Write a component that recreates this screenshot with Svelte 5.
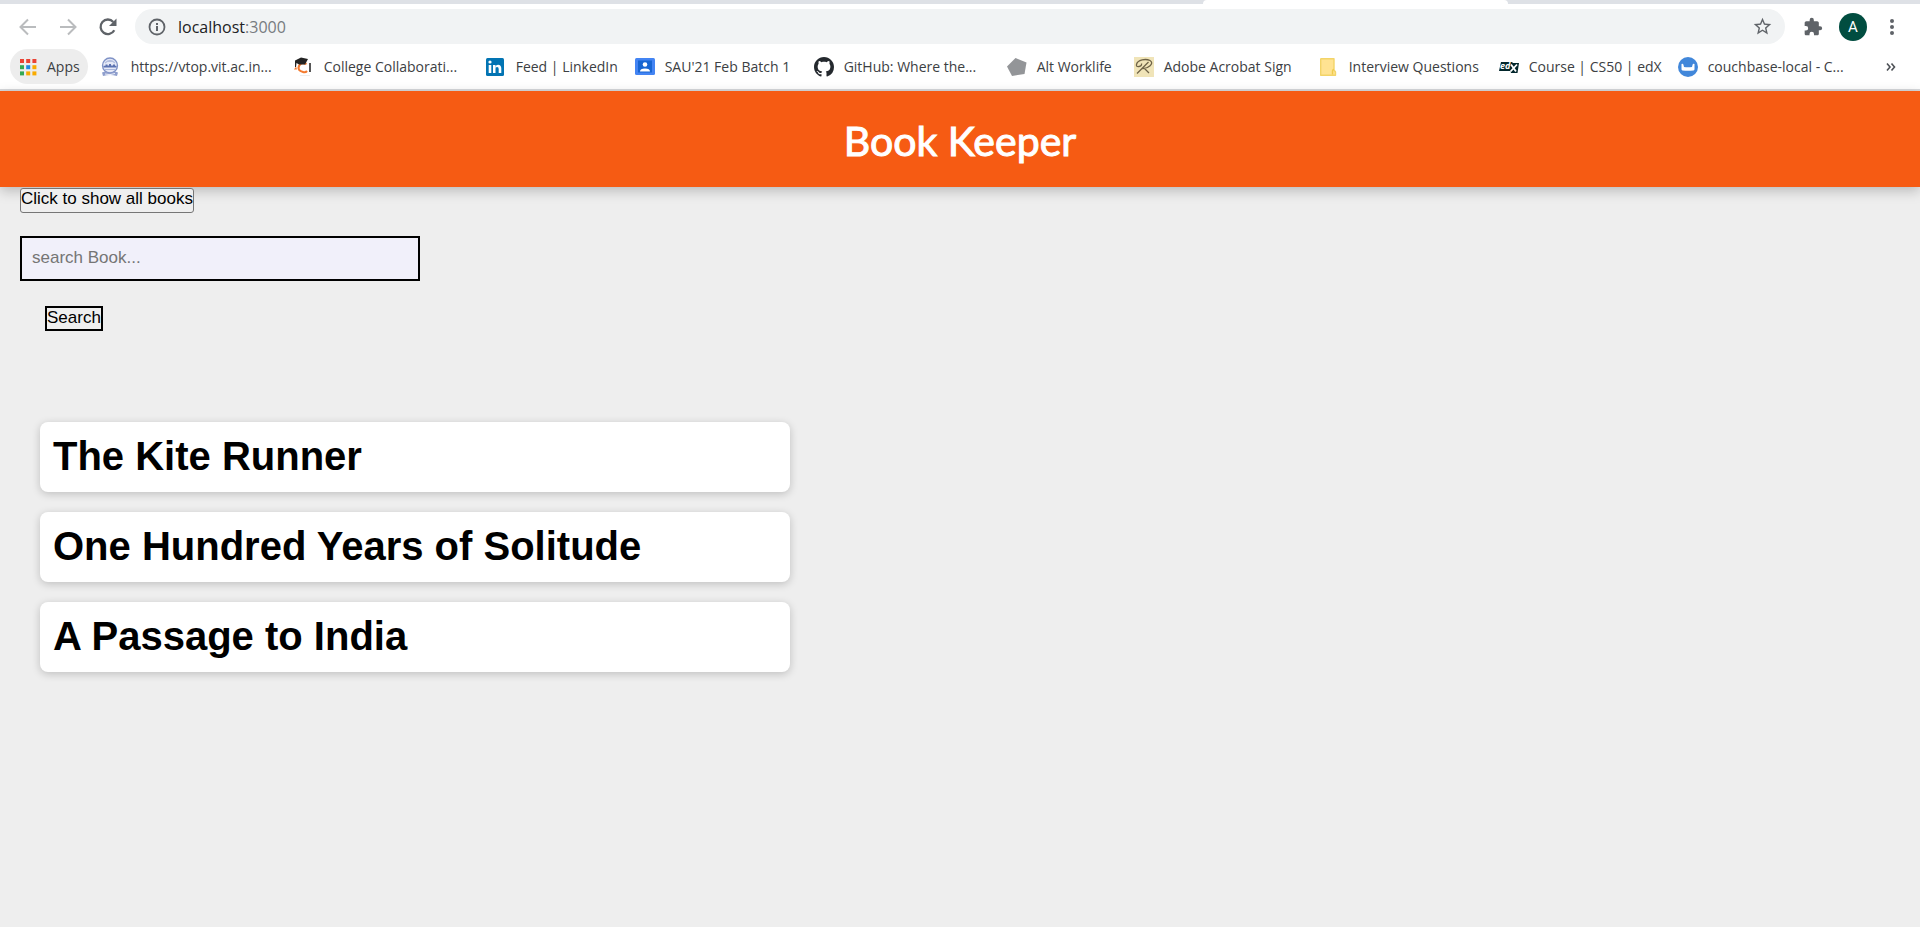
<script>
  const bookmarks = [
    { icon: 'vit', label: 'https://vtop.vit.ac.in...', width: 193 },
    { icon: 'college', label: 'College Collaborati...', width: 192 },
    { icon: 'linkedin', label: 'Feed | LinkedIn', width: 149 },
    { icon: 'contacts', label: "SAU'21 Feb Batch 1", width: 179 },
    { icon: 'github', label: 'GitHub: Where the...', width: 193 },
    { icon: 'pentagon', label: 'Alt Worklife', width: 127 },
    { icon: 'sign', label: 'Adobe Acrobat Sign', width: 185 },
    { icon: 'note', label: 'Interview Questions', width: 180 },
    { icon: 'edx', label: 'Course | CS50 | edX', width: 179 },
    { icon: 'couch', label: 'couchbase-local - C...', width: 180 }
  ];
  const appColors = ['#ea4335', '#ea4335', '#ea4335', '#34a853', '#1e88e5', '#f9ab00', '#34a853', '#f9ab00', '#f9ab00'];
  const books = ['The Kite Runner', 'One Hundred Years of Solitude', 'A Passage to India'];
  let query = $state('');
</script>

<div class="browser">
  <div class="tabs"><div class="tab"></div></div>

  <nav class="toolbar" aria-label="Navigation">
    <button class="tool" aria-label="Back">
      <svg width="20" height="20" viewBox="0 0 20 20" fill="none" stroke="#babcbe" stroke-width="2"><path d="M18 10H3M10 2.500L2.500 10L10 17.500" /></svg>
    </button>
    <button class="tool" aria-label="Forward">
      <svg width="20" height="20" viewBox="0 0 20 20" fill="none" stroke="#babcbe" stroke-width="2"><path d="M2 10H17M10 2.500L17.500 10L10 17.500" /></svg>
    </button>
    <button class="tool reload" aria-label="Reload">
      <svg width="20" height="20" viewBox="0 0 20 20"><path d="M16.300 13.300A7.300 7.300 0 1 1 15.300 4.900" fill="none" stroke="#5f6368" stroke-width="2.300" /><path d="M18.500 1.500V9H11z" fill="#5f6368" /></svg>
    </button>
    <div class="address">
      <svg width="18" height="18" viewBox="0 0 18 18"><circle cx="9" cy="9" r="7.500" fill="none" stroke="#5f6368" stroke-width="1.800" /><path d="M8 8h2v5H8zM8 5h2v2H8z" fill="#5f6368" /></svg>
      <span class="url">localhost<span>:3000</span></span>
      <button class="star" aria-label="Bookmark this page">
        <svg width="21" height="21" viewBox="0 0 24 24" fill="#5f6368"><path d="M22 9.240l-7.190-.620L12 2 9.190 8.630 2 9.240l5.460 4.730L5.820 21 12 17.270 18.180 21l-1.630-7.030L22 9.240zM12 15.400l-3.760 2.270 1-4.280-3.320-2.880 4.380-.380L12 6.100l1.710 4.040 4.380.380-3.320 2.880 1 4.280L12 15.400z" /></svg>
      </button>
    </div>
    <button class="tool puzzle" aria-label="Extensions">
      <svg width="20" height="20" viewBox="0 0 24 24" fill="#5f6368"><path d="M20.500 11H19V7c0-1.100-.900-2-2-2h-4V3.500a2.500 2.500 0 0 0-5 0V5H4c-1.100 0-2 .900-2 2v3.800h1.500a2.700 2.700 0 0 1 0 5.400H2V20c0 1.100.900 2 2 2h3.800v-1.500a2.700 2.700 0 0 1 5.400 0V22H17c1.100 0 2-.900 2-2v-4h1.500a2.500 2.500 0 0 0 0-5z" /></svg>
    </button>
    <button class="avatar" aria-label="Profile">A</button>
    <button class="tool more" aria-label="Menu">
      <svg width="6" height="18" viewBox="0 0 6 18" fill="#5f6368"><circle cx="3" cy="3" r="2" /><circle cx="3" cy="9" r="2" /><circle cx="3" cy="15" r="2" /></svg>
    </button>
  </nav>

  <nav class="bookmarks" aria-label="Bookmarks">
    <a class="apps" href="#apps">
      <svg width="18" height="18" viewBox="0 0 18 18">
        {#each appColors as color, i}
          <rect x={1 + (i % 3) * 6.2} y={1 + Math.floor(i / 3) * 6.2} width="4" height="4" fill={color} />
        {/each}
      </svg>
      Apps
    </a>
    {#each bookmarks as b}
      <a class="bookmark" href={'#' + b.icon} style:width={b.width + 'px'}>
        <svg width="20" height="20" viewBox="0 0 20 20">
          {#if b.icon === 'vit'}
            <circle cx="9" cy="8.500" r="7.500" fill="#e6eaf7" stroke="#7f92c6" stroke-width="1.300" />
            <path d="M4 6q5-5 10 0M6 4.500h6" fill="none" stroke="#b4bfdf" stroke-width="1.200" />
            <path d="M2.500 10.500V8.800h2V7.500h2v1h1.500V7h2v1.500H12V7.500h2v1.300h1.500v1.700z" fill="#5c73b2" /><path d="M3 12.500h12" stroke="#aab7dc" />
            <path d="M1 15.500l3-1q5 2.500 10 0l3 1-1 3.500q-7-2-14 0z" fill="#8f9fcd" /><path d="M4 17q5 1.500 10-.500" fill="none" stroke="#eef1fa" />
          {:else if b.icon === 'college'}
            <path d="M12.500 7Q7 4.500 5 9T9 15q2.500.800 4-1" fill="none" stroke="#f47b30" stroke-width="2.200" />
            <path d="M2 9.500l-2 3h3z" fill="#f47b30" />
            <path d="M1 3.500L7 .500 14 2l-3 5.500H5L2.500 6 2 10H1z" fill="#242424" />
            <path d="M16 6v9" stroke="#444" stroke-width="1.800" /><path d="M6 18.500h10" stroke="#eee" />
          {:else if b.icon === 'linkedin'}
            <rect y="1" width="18" height="18" rx="1.500" fill="#0274b3" />
            <g fill="#fff"><path d="M2.700 8h2.600v8H2.700zM7 8h2.500v8H7z" /><circle cx="4" cy="5" r="1.600" /><path d="M9.400 9.300Q10.300 7.800 12 7.800q3.300 0 3.300 3.800V16h-2.600v-4q0-2-1.600-2-1.700 0-1.700 2z" /></g>
          {:else if b.icon === 'contacts'}
            <rect y="1" width="20" height="17" rx="1.500" fill="#4384f3" /><rect x="3" y="3.500" width="14" height="12" fill="#1765d2" />
            <circle cx="10" cy="7.500" r="2.300" fill="#fff" /><path d="M5 14.500q0-3 5-3t5 3z" fill="#fff" />
          {:else if b.icon === 'github'}
            <path transform="scale(1.250)" fill="#24292e" d="M8 0C3.580 0 0 3.580 0 8c0 3.540 2.290 6.530 5.470 7.590.400.070.550-.170.550-.380 0-.190-.010-.820-.010-1.490-2.010.370-2.530-.490-2.690-.940-.090-.230-.480-.940-.820-1.130-.280-.150-.680-.520-.010-.530.630-.010 1.080.580 1.230.820.720 1.210 1.870.870 2.330.660.070-.520.280-.870.510-1.070-1.780-.200-3.640-.890-3.640-3.950 0-.870.310-1.590.820-2.150-.080-.200-.360-1.020.080-2.120 0 0 .670-.210 2.200.820.640-.180 1.320-.270 2-.270s1.360.090 2 .270c1.530-1.040 2.200-.820 2.200-.820.440 1.100.160 1.920.080 2.120.510.560.820 1.270.820 2.150 0 3.070-1.870 3.750-3.650 3.950.290.250.540.730.540 1.480 0 1.070-.010 1.930-.010 2.200 0 .210.150.460.550.380A8.010 8.010 0 0 0 16 8c0-4.420-3.580-8-8-8z" />
          {:else if b.icon === 'pentagon'}
            <path d="M8.500 1L19.500 5.500 17.500 17 5 19 0 9.500z" fill="#939598" />
          {:else if b.icon === 'sign'}
            <rect width="20" height="20" fill="#f0e4b8" />
            <path d="M3 16.500L14.500 5M5 9.500Q2 10 2.500 7.500C3.500 2.500 12 1.500 16 3.500c5 3-2 8.500-8 8M5 9.500Q8 9 7.500 6.500M10 11l5 5" fill="none" stroke="#6e6347" stroke-width="1.300" />
          {:else if b.icon === 'note'}
            <path d="M2 1.700h13V13l1.500 2v3.300H1.700V2z" fill="#ffe392" stroke="#f3d468" stroke-width="1.400" stroke-linejoin="round" /><path d="M13.500 17.500v-3q0-2 1.500-2" fill="none" stroke="#efcb4d" stroke-width="1.400" />
          {:else if b.icon === 'edx'}
            <path d="M2 5h11l1 1h6l-1.500 10H12l-.500-2H0z" fill="#02262b" />
            <text x="1" y="12" class="edx">ed</text><path d="M12 7.500l5 7M18 7.500l-6.500 7" stroke="#fff" stroke-width="1.800" />
          {:else}
            <circle cx="10" cy="10" r="10" fill="#4187da" />
            <path d="M3.500 7q1.700-.600 2 1l.500 2q4 .600 8 0l.500-2q.300-1.600 2-1v5.200q0 1-1 1.200-5.500.900-11 0-1-.200-1-1.200z" fill="#fff" />
          {/if}
        </svg>
        <span>{b.label}</span>
      </a>
    {/each}
    <button class="overflow" aria-label="More bookmarks">
      <svg width="10" height="10" viewBox="0 0 10 10" fill="none" stroke="#4d5156" stroke-width="1.600"><path d="M1 1.500L4 5 1 8.500M5.500 1.500l3 3.500-3 3.500" /></svg>
    </button>
  </nav>
</div>

<header><h1>Book Keeper</h1></header>

<main>
  <button class="show">Click to show all books</button>
  <form onsubmit={(e) => e.preventDefault()}>
    <input type="text" placeholder="search Book..." aria-label="Search book" bind:value={query} />
    <button class="search">Search</button>
  </form>
  <ul>
    {#each books as book}
      <li><h2>{book}</h2></li>
    {/each}
  </ul>
</main>

<style>
  :global(body) { margin: 0; background: #eee; }
  * { box-sizing: border-box; }
  svg { display: block; flex: none; }
  button { margin: 0; padding: 0; border: 0; background: none; color: inherit; }
  .browser { background: #fff; border-bottom: 2px solid #d6d8db; font-family: "Segoe UI", "Open Sans", sans-serif; }
  .tabs { height: 4px; background: #dee1e6; display: flex; justify-content: flex-end; padding-right: 412px; }
  .tab { width: 305px; background: #fff; border-radius: 4px 4px 0 0; }
  .toolbar { display: flex; align-items: center; padding: 5px 18px; }
  .tool { width: 20px; height: 20px; margin-right: 20px; display: flex; align-items: center; justify-content: center; }
  .reload { margin-right: 17px; }
  .address { flex: 1; height: 35px; border-radius: 18px; background: #f1f3f4; display: flex; align-items: center; gap: 12px; padding: 0 12px 0 13px; margin-right: 18px; }
  .url { flex: 1; font-size: 16px; line-height: 24px; color: #202124; }
  .url span { color: #777b80; }
  .puzzle { margin-right: 16px; }
  .avatar { width: 28px; height: 28px; border-radius: 50%; background: #014d40; color: #fff; font: 15px Roboto, sans-serif; margin-right: 15px; }
  .more { margin: 0; }
  .bookmarks { display: flex; align-items: center; height: 40px; padding: 0 24px 5px 10px; font-size: 14px; line-height: 20px; }
  .bookmarks a { color: #3c4043; text-decoration: none; white-space: nowrap; display: flex; align-items: center; }
  .apps { gap: 10px; height: 35px; padding: 0 8px 0 9px; border-radius: 18px; background: #ededed; margin-right: 13px; }
  .bookmark { gap: 10px; flex: none; }
  .overflow { margin-left: auto; }
  .edx { font: italic bold 9px "Open Sans", sans-serif; fill: #fff; }
  header { background: #f65b13; height: 96px; display: flex; align-items: center; justify-content: center; padding-top: 4px; box-shadow: 0 4px 12px rgba(0, 0, 0, 0.22); }
  h1 { margin: 0; color: #fff; font-family: "Comic Sans MS", Lato, sans-serif; font-size: 41px; font-weight: 400; line-height: 56px; -webkit-text-stroke: 1px #fff; }
  main { padding: 1px 20px; font-family: Arial, "Liberation Sans", sans-serif; color: #000; }
  .show, .search, input { font-family: inherit; font-size: 17px; display: block; }
  .show, .search { height: 25px; line-height: 20px; padding-bottom: 3px; background: #efefef; }
  .show { border: 1px solid #767676; border-radius: 3px; }
  input { width: 400px; max-width: 100%; height: 45px; margin: 23px 0 25px; padding: 0 10px 2px; border: 2px solid #000; background: #f1f0fa; outline: 0; }
  input::placeholder { color: #757575; opacity: 1; }
  .search { margin-left: 25px; border: 2px solid #000; }
  ul { list-style: none; margin: 91px 20px 20px; padding: 0; max-width: 750px; display: grid; gap: 20px; }
  li { background: #fff; border-radius: 8px; padding: 11px 13px 13px; box-shadow: 0 2px 8px rgba(0, 0, 0, 0.2); }
  h2 { margin: 0; font-size: 40px; line-height: 46px; font-weight: 700; }
</style>
